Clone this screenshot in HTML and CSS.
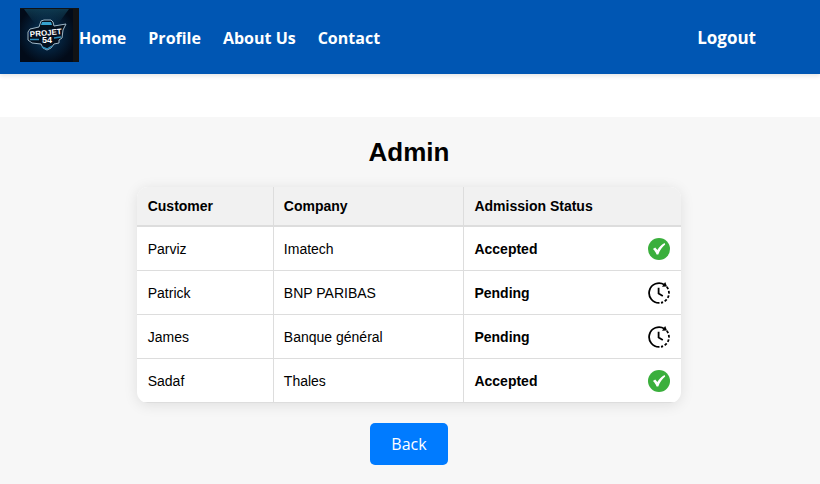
FILE: index.html
```html
<!DOCTYPE html>
<html lang="en">
<head>
<meta charset="utf-8">
<meta name="viewport" content="width=device-width, initial-scale=1">
<title>Admin</title>
<link rel="stylesheet" href="styles.css">
</head>
<body>
<svg class="sprite" aria-hidden="true">
  <symbol id="check" viewBox="0 0 22 22">
    <circle cx="11" cy="11" r="11" fill="#3aaf3c"/>
    <path d="M4.9 11 7.2 9.6 9.4 11.9C11 9.2 13 6.8 16.6 4.9L17.2 6.5C14.2 9 12 12 10.3 16.4H8.6C7.6 14.2 6.5 12.4 4.9 11Z" fill="#fff"/>
  </symbol>
  <symbol id="clock" viewBox="0 0 22 22">
    <g fill="none" stroke="#000" stroke-width="1.8">
      <path d="M16.4 2.7A9.9 9.9 0 1 0 11.5 20.9"/>
      <path d="M18.1 4A10 10 0 0 1 13 20.8" stroke-dasharray="2.7 1.8" stroke-dashoffset="-1"/>
      <path d="M10.6 5.8V11.6L14.8 14"/>
    </g>
    <path d="M17.2 0 19 4.6 14 4.8Z"/>
  </symbol>
</svg>
<header class="navbar">
  <svg class="logo" viewBox="0 0 59 54" role="img" aria-label="Projet 54">
    <defs>
      <radialGradient id="glow" cx=".5" cy=".48" r=".55">
        <stop offset="0" stop-color="#0d4a70"/>
        <stop offset=".55" stop-color="#04203a"/>
        <stop offset="1" stop-color="#020b19"/>
      </radialGradient>
      <linearGradient id="beam" x1="0" y1="0" x2="0" y2="1">
        <stop offset="0" stop-color="#17556f" stop-opacity=".6"/>
        <stop offset="1" stop-color="#17556f" stop-opacity="0"/>
      </linearGradient>
    </defs>
    <rect width="59" height="54" fill="#111315"/>
    <rect width="53" height="53" y="1" fill="url(#glow)"/>
    <path d="M4 1H49L38 16H15Z" fill="url(#beam)"/>
    <path d="M19 19 21 13 24 12H31L33 14 34 18 46 16 43 22 42 30 39 32V35L34 36 31 40 27 42 23 40 21 36 12 35 8 32V24L10 21Z" fill="#04101e" stroke="#9fb7c7" stroke-width="1"/>
    <path d="M21 17 22 14H31L32 17Z" fill="#37a2cf"/>
    <path d="M10 31.500H19M34 30 41 29M22 39 27 41 32 38" fill="none" stroke="#2d8dbc" stroke-width="1.4"/>
    <text class="logo-name" x="26" y="27.5" transform="rotate(-5 26 27)">PROJET</text>
    <text class="logo-number" x="27" y="35">54</text>
  </svg>
  <nav class="links">
    <a href="#">Home</a>
    <a href="#">Profile</a>
    <a href="#">About Us</a>
    <a href="#">Contact</a>
  </nav>
  <a class="logout" href="#">Logout</a>
</header>
<main class="content">
  <h1>Admin</h1>
  <div class="card">
    <table>
      <thead>
        <tr><th class="customer" scope="col">Customer</th><th class="company" scope="col">Company</th><th scope="col">Admission Status</th></tr>
      </thead>
      <tbody>
        <tr><td>Parviz</td><td>Imatech</td><td><div class="status">Accepted<svg class="icon" aria-hidden="true"><use href="#check"/></svg></div></td></tr>
        <tr><td>Patrick</td><td>BNP PARIBAS</td><td><div class="status">Pending<svg class="icon" aria-hidden="true"><use href="#clock"/></svg></div></td></tr>
        <tr><td>James</td><td>Banque général</td><td><div class="status">Pending<svg class="icon" aria-hidden="true"><use href="#clock"/></svg></div></td></tr>
        <tr><td>Sadaf</td><td>Thales</td><td><div class="status">Accepted<svg class="icon" aria-hidden="true"><use href="#check"/></svg></div></td></tr>
      </tbody>
    </table>
  </div>
  <button class="back" type="button">Back</button>
</main>
</body>
</html>
```
FILE: styles.css
```css
* {
  box-sizing: border-box;
}

html {
  background: #f7f7f7;
}

body {
  margin: 0;
  background: #fff;
  color: #000;
  font-family: "Liberation Sans", Arial, sans-serif;
  font-size: 14px;
}

.sprite {
  display: none;
}

.navbar {
  display: flex;
  align-items: center;
  padding: 8px 64px 12px 20px;
  background: #0056b3;
  box-shadow: 0 2px 4px rgba(0, 0, 0, 0.1);
  font-family: "Open Sans", "Noto Sans", sans-serif;
  font-size: 16px;
  font-weight: 700;
  line-height: 24px;
}

.navbar a {
  color: #fff;
  text-decoration: none;
}

.logo {
  width: 59px;
  height: 54px;
}

.logo-name,
.logo-number {
  fill: #fff;
  font-family: "Liberation Sans", Arial, sans-serif;
  font-weight: 700;
  text-anchor: middle;
}

.logo-name {
  font-size: 8px;
}

.logo-number {
  font-size: 9px;
}

.links {
  display: flex;
  flex: 1;
  gap: 22px;
  padding-top: 6px;
}

.logout {
  padding-top: 5px;
  font-size: 17px;
}

.content {
  display: flex;
  flex-direction: column;
  align-items: center;
  margin-top: 43px;
  padding: 19px 22px 20px 20px;
  background: #f7f7f7;
}

h1 {
  margin: 0 0 19px;
  font-size: 26px;
  line-height: 32px;
}

.card {
  width: 70%;
  overflow: hidden;
  border-radius: 11px;
  background: #fff;
  box-shadow: 0 2px 14px rgba(0, 0, 0, 0.1);
}

table {
  width: 100%;
  border-collapse: separate;
  border-spacing: 0;
  table-layout: fixed;
}

th,
td {
  height: 44px;
  padding: 10px 11px;
  border-bottom: 1px solid #ddd;
  text-align: left;
}

th + th,
td + td {
  border-left: 1px solid #ddd;
  padding-left: 10px;
}

th {
  height: 40px;
  border-bottom-width: 2px;
  background: #f1f1f1;
}

.customer {
  width: 25%;
}

.company {
  width: 35%;
}

.status {
  display: flex;
  align-items: center;
  justify-content: space-between;
  font-weight: 700;
}

.icon {
  width: 22px;
  height: 22px;
}

.back {
  margin-top: 20px;
  padding: 9px 21px;
  border: 0;
  border-radius: 5px;
  background: #007bff;
  color: #fff;
  font-family: "Open Sans", "Noto Sans", sans-serif;
  font-size: 16px;
  line-height: 24px;
}
```
